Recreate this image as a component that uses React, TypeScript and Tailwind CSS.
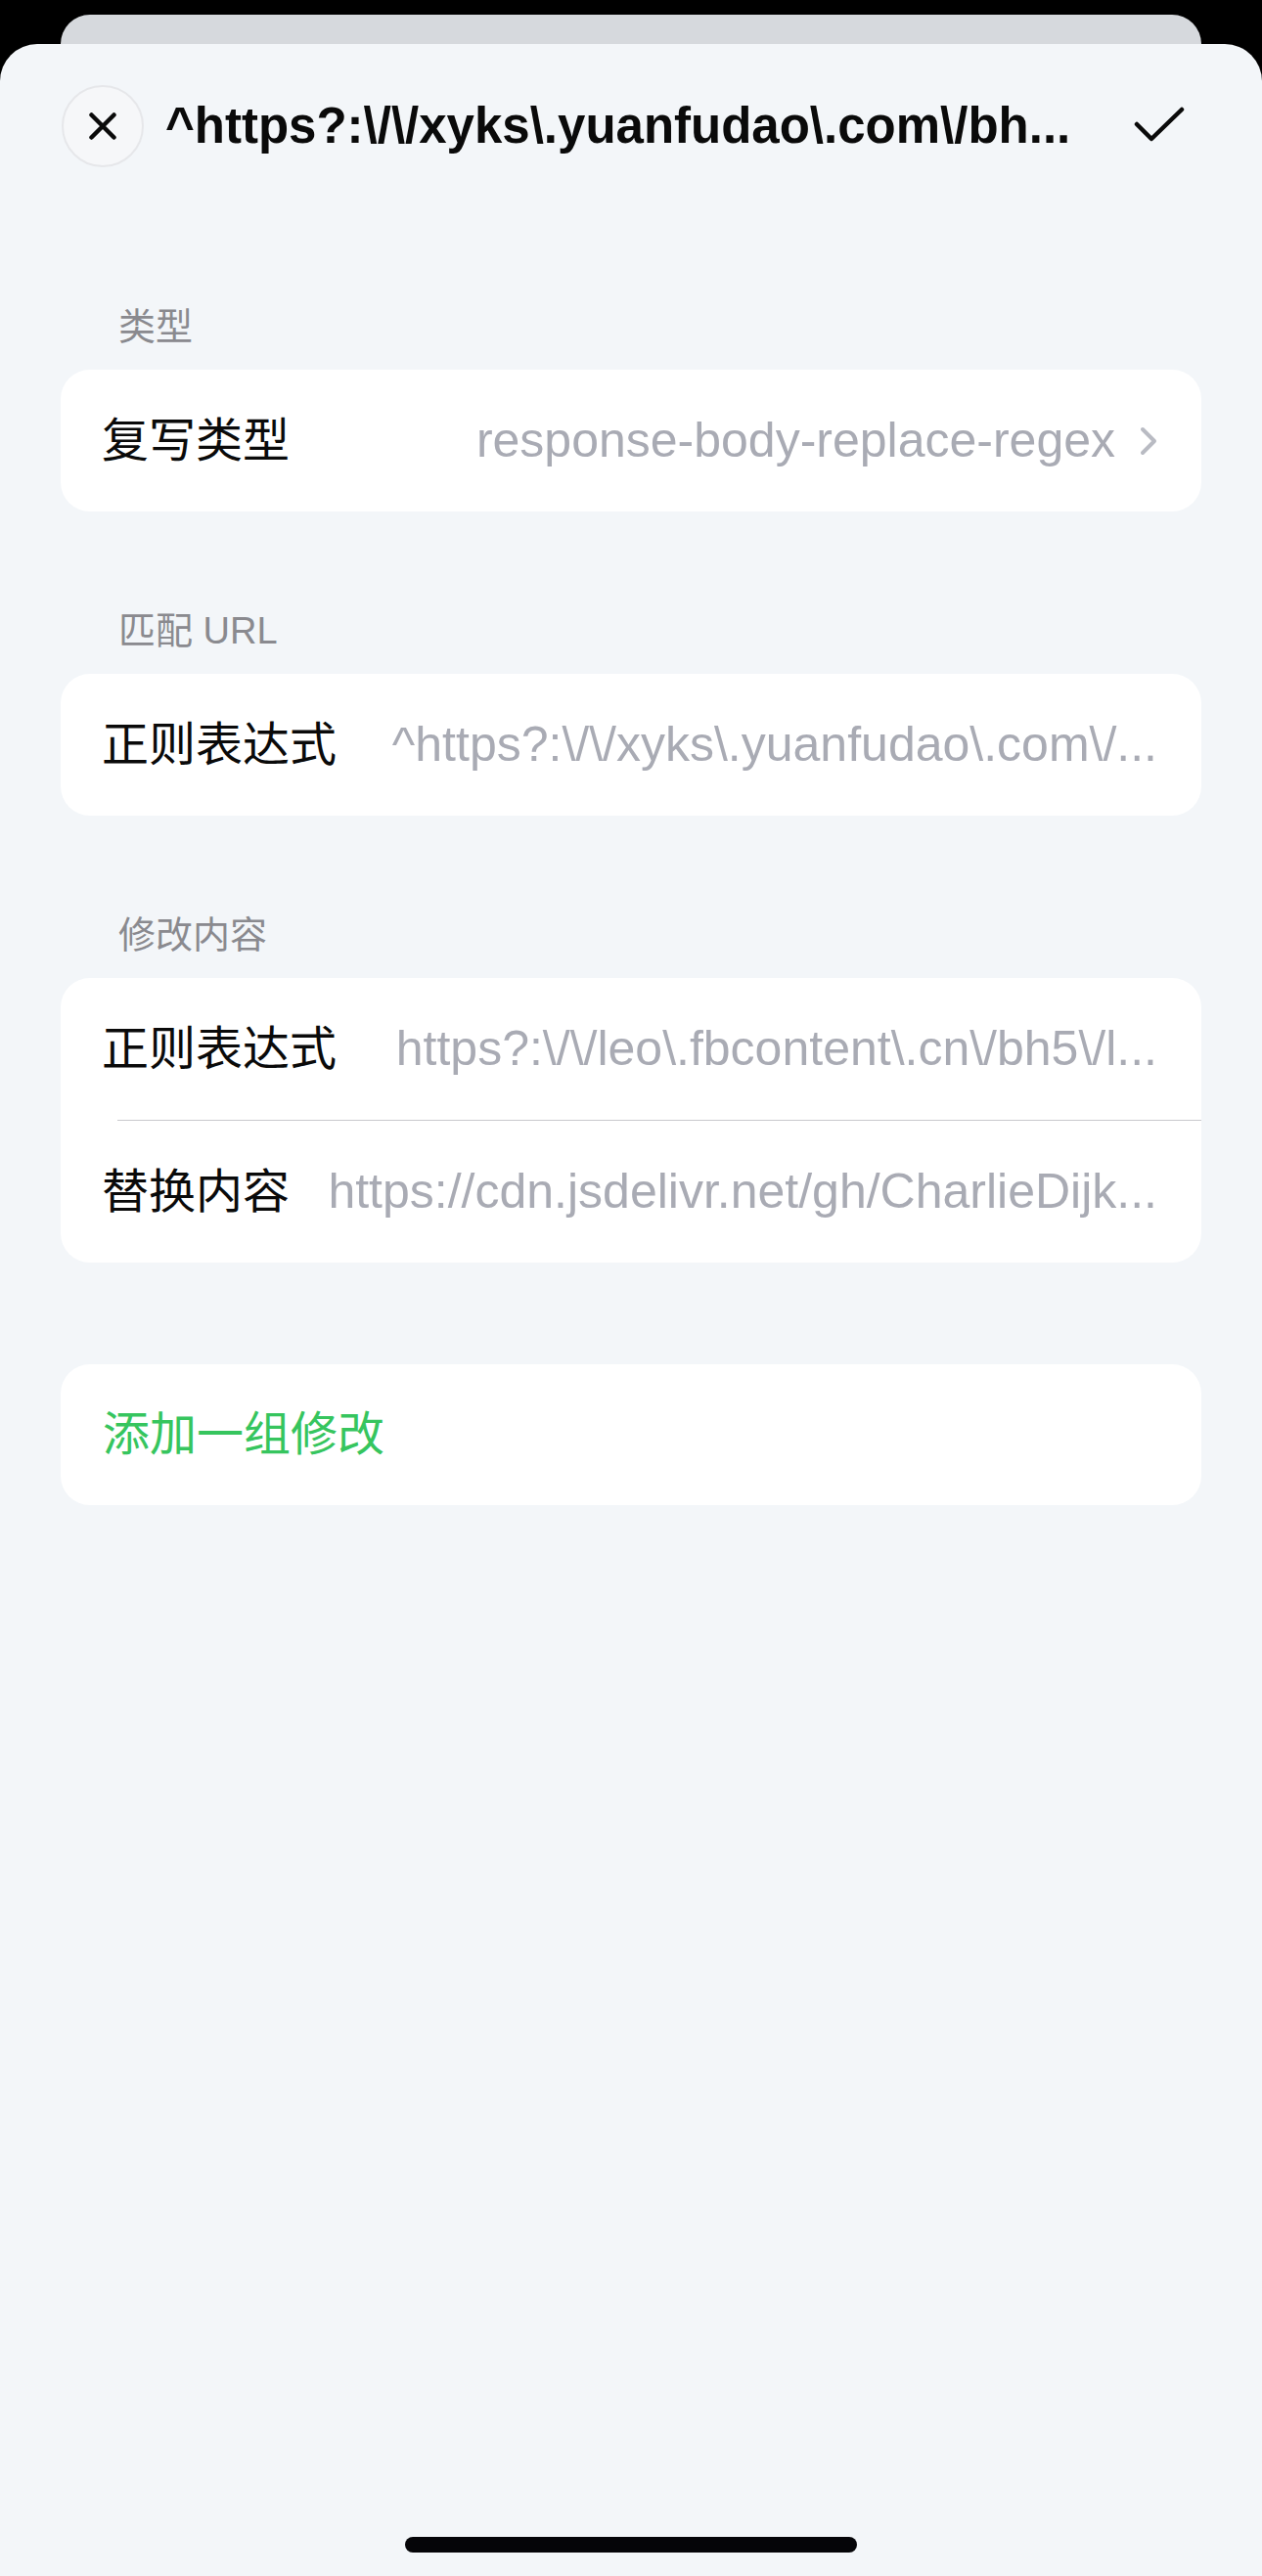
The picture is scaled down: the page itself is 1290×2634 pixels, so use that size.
import React from "react";

const FONT = "font-['Liberation_Sans','Noto_Sans_CJK_SC',sans-serif]";

interface RowProps {
  label: string;
  value: string;
  chevron?: boolean;
}

function Row({ label, value, chevron }: RowProps) {
  return (
    <div className="flex h-[145px] items-center pl-[42px] pr-[45px]">
      <span className="shrink-0 text-[48px] text-[#0a0a0a]">{label}</span>
      <span className="ml-[30px] flex-1 whitespace-nowrap text-right text-[50px] text-[#a9abb4]">
        {value}
      </span>
      {chevron && (
        <svg width="18" height="30" viewBox="0 0 18 30" className="ml-[25px] shrink-0">
          <polyline
            points="3,3 15,15 3,27"
            fill="none"
            stroke="#b9bbc3"
            strokeWidth="4"
            strokeLinecap="round"
            strokeLinejoin="round"
          />
        </svg>
      )}
    </div>
  );
}

function SectionLabel({ text, className }: { text: string; className: string }) {
  return (
    <div className={`h-[39px] pl-[59px] text-[38px] leading-[39px] text-[#8a8a8f] ${className}`}>
      {text}
    </div>
  );
}

export default function App() {
  return (
    <div className={`h-[2634px] w-full overflow-hidden bg-black ${FONT}`}>
      {/* sheet behind */}
      <div className="mx-[62px] mt-[15px] h-[30px] rounded-t-[30px] bg-[#d6d9dd]" />

      <div className="flex h-[2589px] flex-col rounded-t-[38px] bg-[#f3f6f9]">
        {/* header */}
        <div className="mt-[42px] flex h-[84px] items-center pl-[63px]">
          <button className="flex h-[84px] w-[84px] shrink-0 items-center justify-center rounded-full border-2 border-[#e6e7ea] bg-[#f6f7f9]">
            <svg width="28" height="28" viewBox="0 0 28 28">
              <path
                d="M2.5 2.5 L25.5 25.5 M25.5 2.5 L2.5 25.5"
                stroke="#0a0a0a"
                strokeWidth="4.5"
                strokeLinecap="round"
              />
            </svg>
          </button>
          <div className="ml-[22px] whitespace-nowrap text-[51px] font-bold text-[#0a0a0a]">
            {"^https?:\\/\\/xyks\\.yuanfudao\\.com\\/bh..."}
          </div>
          <svg width="54" height="40" viewBox="0 0 54 40" className="ml-auto mr-[78px] shrink-0">
            <polyline
              points="4,18 19,33 50,3"
              fill="none"
              stroke="#0a0a0a"
              strokeWidth="4.5"
              strokeLinecap="round"
              strokeLinejoin="round"
            />
          </svg>
        </div>

        <div className="flex flex-col px-[62px]">
          <SectionLabel text="类型" className="mt-[144px]" />
          <div className="mt-[24px] overflow-hidden rounded-[30px] bg-white">
            <Row label="复写类型" value="response-body-replace-regex" chevron />
          </div>

          <SectionLabel text="匹配 URL" className="mt-[103px]" />
          <div className="mt-[24px] overflow-hidden rounded-[30px] bg-white">
            <Row label="正则表达式" value={"^https?:\\/\\/xyks\\.yuanfudao\\.com\\/..."} />
          </div>

          <SectionLabel text="修改内容" className="mt-[103px]" />
          <div className="mt-[24px] overflow-hidden rounded-[30px] bg-white">
            <Row label="正则表达式" value={"https?:\\/\\/leo\\.fbcontent\\.cn\\/bh5\\/l..."} />
            <div className="ml-[58px] h-px bg-[#c8c9cd]" />
            <Row label="替换内容" value="https://cdn.jsdelivr.net/gh/CharlieDijk..." />
          </div>

          <div className="mt-[104px] flex h-[144px] items-center rounded-[30px] bg-white pl-[43px]">
            <span className="text-[48px] text-[#36c55e]">添加一组修改</span>
          </div>
        </div>

        {/* home indicator */}
        <div className="mx-auto mb-[24px] mt-auto h-[16px] w-[462px] rounded-full bg-[#050508]" />
      </div>
    </div>
  );
}
